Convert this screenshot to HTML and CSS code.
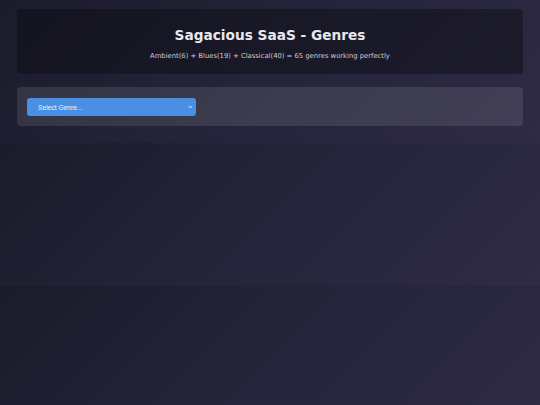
FILE: index.html
```html
<!DOCTYPE html>
<html lang="en">
<head>
<meta charset="utf-8">
<title>Sagacious SaaS - Genres</title>
<link rel="stylesheet" href="styles.css">
</head>
<body>
<div class="page">
  <header class="hero">
    <h1 class="title">Sagacious SaaS - Genres</h1>
    <p class="subtitle">Ambient(6) + Blues(19) + Classical(40) = 65 genres working perfectly</p>
  </header>
  <section class="panel">
    <div class="select">
      <span class="select-text">Select Genre...</span>
      <svg class="chev" width="5" height="4" viewBox="0 0 5 4"><path d="M0.8 1 L2.5 2.8 L4.2 1" fill="none" stroke="#e8eefa" stroke-width="1"/></svg>
    </div>
  </section>
</div>
</body>
</html>
```
FILE: styles.css
```css
html, body { margin: 0; padding: 0; }
body {
  background: linear-gradient(135deg, #1c1b2b 0%, #25243a 50%, #2e2b44 100%);
  font-family: "DejaVu Sans", Verdana, sans-serif;
  color: #e6e6ee;
}
.page {
  padding: 9px 17px 17px;
  display: flex;
  flex-direction: column;
  gap: 13px;
}
.hero {
  height: 65px;
  box-sizing: border-box;
  background: rgba(10, 10, 18, 0.45);
  border-radius: 4px;
  display: flex;
  flex-direction: column;
  align-items: center;
  padding-top: 18px;
}
.title {
  margin: 0;
  font-size: 13.7px;
  font-weight: bold;
  line-height: 16px;
  color: #e8e8ee;
}
.subtitle {
  margin: 9px 0 0;
  font-size: 6.8px;
  line-height: 9px;
  color: #cfcfd8;
}
.panel {
  height: 39px;
  box-sizing: border-box;
  background: rgba(255, 255, 255, 0.1);
  border-radius: 4px;
  padding: 11px 10px;
  display: flex;
  align-items: flex-start;
}
.select {
  width: 169px;
  height: 18px;
  box-sizing: border-box;
  background: #4a90e2;
  border-radius: 3px;
  display: flex;
  align-items: center;
  justify-content: space-between;
  padding: 0 3px 0 11px;
}
.select-text {
  font-family: "Liberation Sans", Arial, sans-serif;
  font-size: 6.7px;
  color: #eef3fb;
}
.chev { display: block; }
```
